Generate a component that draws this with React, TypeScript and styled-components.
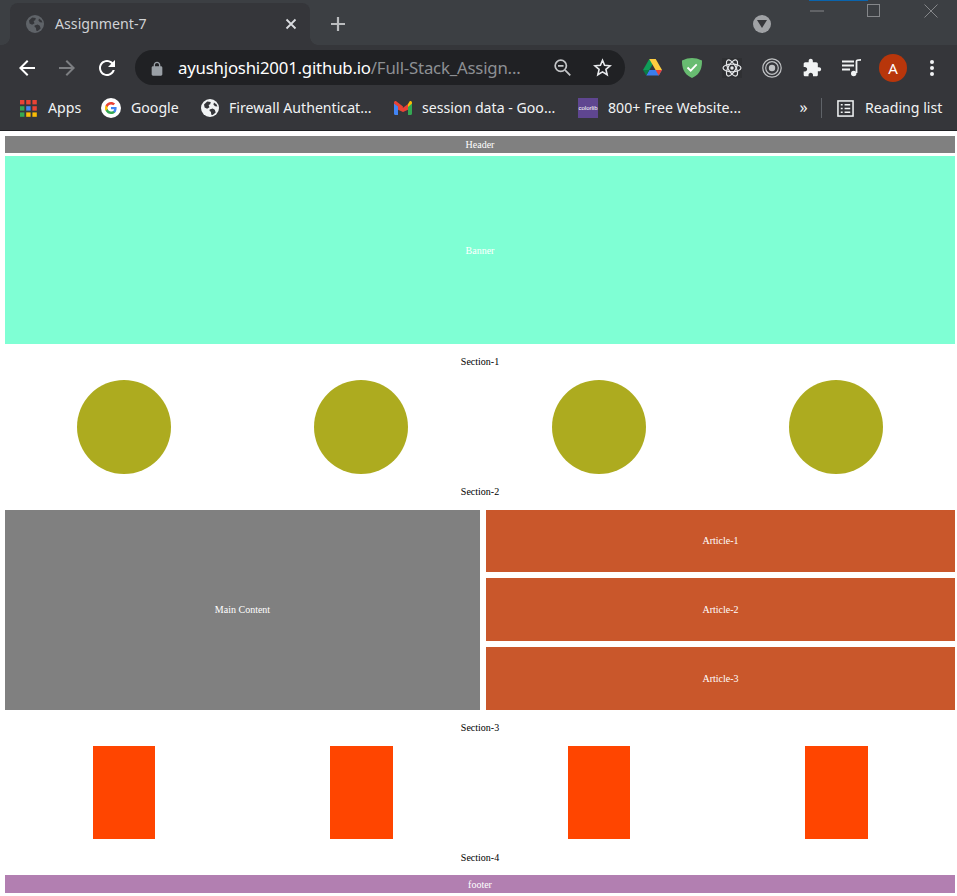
import styled, { createGlobalStyle } from 'styled-components';

const GlobalStyle = createGlobalStyle`
    html, body {
        margin: 0;
        padding: 0;
        background: #fff;
    }
`;

const Window = styled.div`
    width: 957px;
    height: 896px;
    overflow: hidden;
    display: flex;
    flex-direction: column;
`;

/* ---- browser chrome ---- */
const Chrome = styled.div`
    height: 131px;
    flex: none;
    background: #35363a;
    border-bottom: 1px solid #202124;
    box-sizing: border-box;
    font-family: "Noto Sans", "Open Sans", sans-serif;
    color: #fff;
`;

const TabStrip = styled.div`
    height: 45px;
    background: #3c3f43;
    display: flex;
    align-items: flex-end;
    padding-left: 10px;
    position: relative;
`;

const Tab = styled.div`
    width: 300px;
    height: 42px;
    box-sizing: border-box;
    background: #35363a;
    border-radius: 8px 8px 0 0;
    display: flex;
    align-items: center;
    padding: 0 13px 0 16px;
    gap: 11px;
    font-size: 14.2px;
    color: #d0d2d5;
    position: relative;
    &::before, &::after {
        content: "";
        position: absolute;
        bottom: 0;
        width: 8px;
        height: 8px;
        background: radial-gradient(circle at var(--corner), #3c3f43 7.5px, #35363a 8px);
    }
    &::before { left: -8px; --corner: 0 0; }
    &::after { right: -8px; --corner: 100% 0; }
`;

const TabTitle = styled.span`
    flex: 1;
    margin-top: -1px;
`;

const NewTab = styled.div`
    width: 24px;
    height: 24px;
    margin: 0 0 9px 16px;
    color: #babcbe;
`;

const MediaBadge = styled.div`
    width: 18px;
    height: 18px;
    border-radius: 50%;
    background: #a0a2a5;
    margin: 0 0 12px 403px;
    display: flex;
    align-items: center;
    justify-content: center;
`;

const WindowControls = styled.div`
    position: absolute;
    top: 0;
    right: -2px;
    width: 171px;
    height: 20px;
    display: flex;
    &::before {
        content: "";
        position: absolute;
        top: 0;
        left: 21px;
        width: 59px;
        height: 1px;
        background: #0a64ad;
    }
`;

const WindowButton = styled.div`
    flex: 1;
    display: flex;
    align-items: center;
    justify-content: center;
    color: #85878a;
    padding-top: 1px;
`;

const Toolbar = styled.div`
    height: 45px;
    display: flex;
    align-items: center;
    padding-left: 7px;
`;

const ToolButton = styled.div`
    width: 40px;
    height: 40px;
    flex: none;
    display: flex;
    align-items: center;
    justify-content: center;
    color: ${p => p.color || '#fff'};
`;

const Omnibox = styled.div`
    width: 490px;
    height: 35px;
    margin: 0 7px 0 8px;
    background: #202124;
    border-radius: 18px;
    display: flex;
    align-items: center;
    padding: 0 3px 0 14px;
    box-sizing: border-box;
    flex: none;
`;

const LockWrap = styled.div`
    width: 16px;
    height: 16px;
    color: #9aa0a6;
    margin-right: 13px;
`;

const Url = styled.div`
    flex: 1;
    font-size: 16.8px;
    letter-spacing: -0.2px;
    color: #fff;
    white-space: nowrap;
    span { color: #8d9094; }
`;

const Avatar = styled.div`
    width: 28px;
    height: 28px;
    margin-left: 2px;
    border-radius: 50%;
    background: #b8360b;
    display: flex;
    align-items: center;
    justify-content: center;
    font-size: 15px;
`;

const Bookmarks = styled.div`
    height: 40px;
    box-sizing: border-box;
    padding: 0 0 4px 20px;
    display: flex;
    align-items: center;
    font-size: 14.15px;
    color: #f1f3f4;
`;

const Bookmark = styled.div<{ $width: number }>`
    width: ${p => p.$width}px;
    flex: none;
    display: flex;
    align-items: center;
    gap: 10px;
    white-space: nowrap;
`;

const BookmarkLabel = styled.span`
    margin-top: -2px;
`;

const Overflow = styled.div`
    width: 18px;
    margin-left: 1px;
    text-align: center;
    font-size: 16px;
    margin-top: -3px;
`;

const Separator = styled.div`
    width: 1px;
    height: 20px;
    background: #5f6368;
    margin: 0 15px 0 9px;
`;

/* ---- page ---- */
const Page = styled.div`
    flex: 1;
    display: flex;
    flex-direction: column;
    padding: 5px 2px 0 5px;
    font-family: "Liberation Serif", "Times New Roman", serif;
    font-size: 10px;
    color: #fff;
    background: #fff;
`;

const Bar = styled.div<{ $bg: string; $height: number }>`
    height: ${p => p.$height}px;
    flex: none;
    background: ${p => p.$bg};
    display: flex;
    align-items: center;
    justify-content: center;
`;

const Banner = styled(Bar)`
    margin-top: 3px;
`;

const SectionLabel = styled.div<{ $lift?: boolean }>`
    height: 36px;
    box-sizing: border-box;
    padding-bottom: ${p => (p.$lift ? 2 : 0)}px;
    flex: none;
    color: #000;
    display: flex;
    align-items: center;
    justify-content: center;
`;

const FourUp = styled.div`
    display: grid;
    grid-template-columns: repeat(4, 1fr);
    justify-items: center;
    flex: none;
`;

const Circle = styled.div`
    width: 94px;
    height: 94px;
    border-radius: 50%;
    background: #adab1f;
`;

const Block = styled.div`
    width: 62.5px;
    height: 93px;
    background: #ff4500;
`;

const MainRow = styled.div`
    height: 200px;
    flex: none;
    display: grid;
    grid-template-columns: 475px 469px;
    gap: 6px;
`;

const MainContent = styled.div`
    background: #808080;
    padding-bottom: 2px;
    display: flex;
    align-items: center;
    justify-content: center;
`;

const Articles = styled.div`
    display: grid;
    grid-template-rows: 62px 63px 63px;
    gap: 6px;
`;

const Article = styled.div`
    background: #c9572b;
    display: flex;
    align-items: center;
    justify-content: center;
    &:first-child { padding-bottom: 2px; }
`;

/* ---- icons ---- */
const GlobeIcon = ({ size, fg, bg }: { size: number; fg: string; bg: string }) => (
    <svg width={size} height={size} viewBox="0 0 18 18" style={{ flex: 'none' }}>
        <circle cx="9" cy="9" r="9" fill={fg} />
        <path d="M3 5.5 6.2 2.4l3.6.6-.6 2.2L7.6 6l.9 2.3-2.4 1.5L3.6 8.6z" fill={bg} />
        <path d="M8.6 10.4l3-.8 2.2 1.2.9 2.6-3 2.6-1.4-.2-.4-3-1.3-.7z" fill={bg} />
        <path d="M13 3.4l2.6 2.2.8 2-2.4-.4-1.6-1.8z" fill={bg} />
    </svg>
);

const AppsIcon = () => (
    <svg width="17" height="17" viewBox="0 0 17 17" style={{ flex: 'none', marginRight: 1 }}>
        {['#ea4335', '#ea4335', '#ea4335', '#34a853', '#4285f4', '#ea4335', '#34a853', '#fbbc05', '#fbbc05'].map((c, i) => (
            <rect key={i} x={(i % 3) * 6.2} y={Math.floor(i / 3) * 6.2} width="4.4" height="4.4" fill={c} />
        ))}
    </svg>
);

const GoogleIcon = () => (
    <svg width="20" height="20" viewBox="0 0 20 20" style={{ flex: 'none' }}>
        <circle cx="10" cy="10" r="10" fill="#fff" />
        <path d="M15.6 10.2c0-.5 0-.9-.1-1.3H10v2.4h3.2c-.1.8-.6 1.5-1.2 1.9v1.6h2c1-1.1 1.6-2.7 1.6-4.6z" fill="#4285f4" />
        <path d="M10 16c1.6 0 3-.5 4-1.5l-2-1.6c-.5.4-1.2.6-2 .6-1.6 0-2.9-1-3.3-2.4H4.6v1.6C5.6 14.7 7.6 16 10 16z" fill="#34a853" />
        <path d="M6.7 11.1c-.1-.4-.2-.7-.2-1.1s.1-.8.2-1.1V7.3H4.6C4.2 8.1 4 9 4 10s.2 1.9.6 2.7z" fill="#fbbc05" />
        <path d="M10 6.4c.9 0 1.7.3 2.3.9l1.8-1.8C13 4.6 11.6 4 10 4 7.6 4 5.6 5.3 4.6 7.3l2.1 1.6C7.1 7.4 8.4 6.4 10 6.4z" fill="#ea4335" />
    </svg>
);

const GmailIcon = () => (
    <svg width="18" height="14" viewBox="0 0 18 14" style={{ flex: 'none' }}>
        <path d="M4 14H1.2C.5 14 0 13.5 0 12.800V2l4 3z" fill="#4285f4" />
        <path d="M14 14h2.800c.7 0 1.200-.5 1.200-1.200V2l-4 3z" fill="#34a853" />
        <path d="M0 2.500V1.600C0 .3 1.500-.4 2.500.4L9 5.400l-1 3.200L0 2.500z" fill="#ea4335" />
        <path d="M4 3l5 3.800L14 3v5.800L9 11 4 8.800z" fill="#ea4335" />
        <path d="M14 3l1.500-2.600c1-.8 2.500-.1 2.500 1.200v1L14 6z" fill="#fbbc05" />
    </svg>
);

const ColorlibIcon = () => (
    <svg width="20" height="20" viewBox="0 0 20 20" style={{ flex: 'none' }}>
        <rect width="20" height="20" fill="#5f4690" />
        <text x="10" y="12" fontSize="6" fill="#fff" textAnchor="middle" fontFamily="Liberation Sans, sans-serif">colorlib</text>
    </svg>
);

const ReadingIcon = () => (
    <svg width="17" height="17" viewBox="0 0 18 18" fill="none" stroke="#f1f3f4" style={{ flex: 'none', marginRight: 1 }}>
        <rect x="1" y="1" width="16" height="16" strokeWidth="1.600" />
        <path d="M4 5h2M8 5h6M4 9h2M8 9h6M4 13h2M8 13h6" strokeWidth="1.600" />
    </svg>
);

const MaterialIcon = ({ d, size = 24 }: { d: string; size?: number }) => (
    <svg width={size} height={size} viewBox="0 0 24 24" fill="currentColor"><path d={d} /></svg>
);

const ZoomOutIcon = () => (
    <svg width="19" height="19" viewBox="0 0 22 22" fill="none" stroke="#c4c6c8" strokeWidth="2">
        <circle cx="9" cy="9" r="6.500" />
        <path d="M5.800 9h6.400M14 14l6 6" />
    </svg>
);

const StarIcon = () => (
    <svg width="19" height="19" viewBox="0 0 20 20" fill="none" stroke="#e8eaed" strokeWidth="1.700" strokeLinejoin="miter">
        <path d="M10 2.400l2.200 5.300 5.800.5-4.400 3.800 1.300 5.600-4.900-3-4.900 3 1.300-5.600L2 8.200l5.800-.5z" />
    </svg>
);

const DriveIcon = () => (
    <svg width="19" height="17" viewBox="0 0 19 17">
        <path d="M6.300 0h6.400l-3.200 5.600L6.300 11H0z" fill="#0f9d58" />
        <path d="M6.300 0h6.400l6.300 11h-6.400z" fill="#ffcd40" />
        <path d="M3.200 16.500L6.300 11H19l-3.200 5.500z" fill="#3b7ded" />
        <path d="M0 11h6.300l-3.100 5.500z" fill="#0a7d46" />
        <path d="M12.600 11H19l-3.200 5.500z" fill="#ea4335" />
    </svg>
);

const ShieldIcon = () => (
    <svg width="20" height="20" viewBox="0 0 20 20">
        <path d="M10 0c-3 0-6.500.8-10 2.600C0 9 .8 16 10 20c9.200-4 10-11 10-17.400C16.500.8 13 0 10 0z" fill="#68bc71" />
        <path d="M5.500 9.500l3.200 3.200 6-6.400" fill="none" stroke="#fff" strokeWidth="1.800" />
    </svg>
);

const AtomIcon = () => (
    <svg width="20" height="20" viewBox="0 0 20 20" fill="none" stroke="#e4e6e8" strokeWidth="1.200">
        <rect width="20" height="20" fill="#2f3033" stroke="none" />
        <ellipse cx="10" cy="10" rx="9" ry="3.800" />
        <ellipse cx="10" cy="10" rx="9" ry="3.800" transform="rotate(60 10 10)" />
        <ellipse cx="10" cy="10" rx="9" ry="3.800" transform="rotate(120 10 10)" />
        <circle cx="10" cy="10" r="1.700" fill="#e4e6e8" stroke="none" />
    </svg>
);

const TargetIcon = () => (
    <svg width="20" height="20" viewBox="0 0 20 20" fill="none" stroke="#c0c2c4">
        <circle cx="10" cy="10" r="9.200" strokeWidth="1.200" />
        <circle cx="10" cy="10" r="6.300" strokeWidth="1.200" />
        <circle cx="10" cy="10" r="3.200" fill="#c0c2c4" stroke="none" />
    </svg>
);

const QueueIcon = () => (
    <svg width="20" height="18" viewBox="0 0 20 18" fill="none" stroke="#f1f3f4" strokeWidth="1.800">
        <path d="M0 2.500h12M0 6.500h12M0 10.500h8" />
        <path d="M14.500 14V2.200c0-.8 1-1.300 4.500-1.300" />
        <circle cx="11.700" cy="14.500" r="2.700" fill="#f1f3f4" stroke="none" />
    </svg>
);

const DotsIcon = () => (
    <svg width="4" height="16" viewBox="0 0 4 16" fill="#f1f3f4">
        <circle cx="2" cy="2" r="2" />
        <circle cx="2" cy="8" r="2" />
        <circle cx="2" cy="14" r="2" />
    </svg>
);

const BACK = 'M20 11H7.830l5.590-5.590L12 4l-8 8 8 8 1.410-1.410L7.830 13H20v-2z';
const FORWARD = 'M12 4l-1.410 1.410L16.170 11H4v2h12.170l-5.580 5.590L12 20l8-8z';
const RELOAD = 'M17.650 6.350C16.200 4.900 14.210 4 12 4c-4.420 0-7.990 3.580-7.990 8s3.570 8 7.990 8c3.730 0 6.840-2.550 7.730-6h-2.080c-.82 2.330-3.040 4-5.650 4-3.310 0-6-2.690-6-6s2.690-6 6-6c1.660 0 3.140.69 4.220 1.780L13 11h7V4l-2.350 2.350z';
const LOCK = 'M18 8h-1V6c0-2.760-2.240-5-5-5S7 3.240 7 6v2H6c-1.100 0-2 .9-2 2v10c0 1.100.9 2 2 2h12c1.100 0 2-.9 2-2V10c0-1.100-.9-2-2-2zM9 6c0-1.660 1.340-3 3-3s3 1.340 3 3v2H9V6z';
const PUZZLE = 'M20.500 11H19V7c0-1.100-.9-2-2-2h-4V3.500C13 2.120 11.880 1 10.500 1S8 2.120 8 3.500V5H4c-1.100 0-1.990.9-1.990 2v3.800H3.500c1.490 0 2.700 1.210 2.700 2.700s-1.210 2.700-2.700 2.700H2V20c0 1.100.9 2 2 2h3.800v-1.500c0-1.490 1.210-2.700 2.700-2.700 1.490 0 2.700 1.210 2.700 2.700V22H17c1.100 0 2-.9 2-2v-4h1.500c1.380 0 2.500-1.120 2.500-2.500S21.880 11 20.500 11z';

const App = () => {
    const columns = [1, 2, 3, 4];
    return (
        <Window>
            <GlobalStyle />
            <Chrome>
                <TabStrip>
                    <Tab>
                        <GlobeIcon size={18} fg="#5f6368" bg="#35363a" />
                        <TabTitle>Assignment-7</TabTitle>
                        <svg width="12" height="12" viewBox="0 0 12 12" stroke="#dadce0" strokeWidth="1.800">
                            <path d="M1.500 1.500l9 9M10.500 1.500l-9 9" />
                        </svg>
                    </Tab>
                    <NewTab>
                        <svg width="24" height="24" viewBox="0 0 24 24" stroke="currentColor" strokeWidth="2.200">
                            <path d="M12 5v14M5 12h14" />
                        </svg>
                    </NewTab>
                    <MediaBadge>
                        <svg width="10" height="8" viewBox="0 0 10 8"><path d="M0 0h10L5 8z" fill="#35363a" /></svg>
                    </MediaBadge>
                    <WindowControls>
                        <WindowButton>
                            <svg width="14" height="2" viewBox="0 0 14 2" stroke="currentColor"><path d="M0 1h14" /></svg>
                        </WindowButton>
                        <WindowButton>
                            <svg width="13" height="13" viewBox="0 0 13 13" fill="none" stroke="currentColor"><rect x=".5" y=".5" width="12" height="12" /></svg>
                        </WindowButton>
                        <WindowButton>
                            <svg width="14" height="14" viewBox="0 0 14 14" stroke="currentColor"><path d="M.5.500l13 13M13.500.500l-13 13" /></svg>
                        </WindowButton>
                    </WindowControls>
                </TabStrip>
                <Toolbar>
                    <ToolButton><MaterialIcon d={BACK} /></ToolButton>
                    <ToolButton color="#7d7f82"><MaterialIcon d={FORWARD} /></ToolButton>
                    <ToolButton><MaterialIcon d={RELOAD} /></ToolButton>
                    <Omnibox>
                        <LockWrap><MaterialIcon d={LOCK} size={16} /></LockWrap>
                        <Url>ayushjoshi2001.github.io<span>/Full-Stack_Assign...</span></Url>
                        <ToolButton><ZoomOutIcon /></ToolButton>
                        <ToolButton><StarIcon /></ToolButton>
                    </Omnibox>
                    <ToolButton><DriveIcon /></ToolButton>
                    <ToolButton><ShieldIcon /></ToolButton>
                    <ToolButton><AtomIcon /></ToolButton>
                    <ToolButton><TargetIcon /></ToolButton>
                    <ToolButton color="#f1f3f4"><MaterialIcon d={PUZZLE} size={20} /></ToolButton>
                    <ToolButton><QueueIcon /></ToolButton>
                    <ToolButton><Avatar>A</Avatar></ToolButton>
                    <ToolButton><DotsIcon /></ToolButton>
                </Toolbar>
                <Bookmarks>
                    <Bookmark $width={81}><AppsIcon /><BookmarkLabel>Apps</BookmarkLabel></Bookmark>
                    <Bookmark $width={100}><GoogleIcon /><BookmarkLabel>Google</BookmarkLabel></Bookmark>
                    <Bookmark $width={193}><GlobeIcon size={18} fg="#f1f3f4" bg="#35363a" /><BookmarkLabel>Firewall Authenticat...</BookmarkLabel></Bookmark>
                    <Bookmark $width={184}><GmailIcon /><BookmarkLabel>session data - Goo...</BookmarkLabel></Bookmark>
                    <Bookmark $width={216}><ColorlibIcon /><BookmarkLabel>800+ Free Website...</BookmarkLabel></Bookmark>
                    <Overflow>»</Overflow>
                    <Separator />
                    <Bookmark $width={120}><ReadingIcon /><BookmarkLabel>Reading list</BookmarkLabel></Bookmark>
                </Bookmarks>
            </Chrome>
            <Page>
                <Bar $bg="#808080" $height={17}>Header</Bar>
                <Banner $bg="#7fffd4" $height={188}>Banner</Banner>
                <SectionLabel $lift>Section-1</SectionLabel>
                <FourUp>{columns.map(n => <Circle key={n} />)}</FourUp>
                <SectionLabel $lift>Section-2</SectionLabel>
                <MainRow>
                    <MainContent>Main Content</MainContent>
                    <Articles>
                        <Article>Article-1</Article>
                        <Article>Article-2</Article>
                        <Article>Article-3</Article>
                    </Articles>
                </MainRow>
                <SectionLabel $lift>Section-3</SectionLabel>
                <FourUp>{columns.map(n => <Block key={n} />)}</FourUp>
                <SectionLabel>Section-4</SectionLabel>
                <Bar $bg="#b27fb1" $height={18}>footer</Bar>
            </Page>
        </Window>
    );
};

export default App;
